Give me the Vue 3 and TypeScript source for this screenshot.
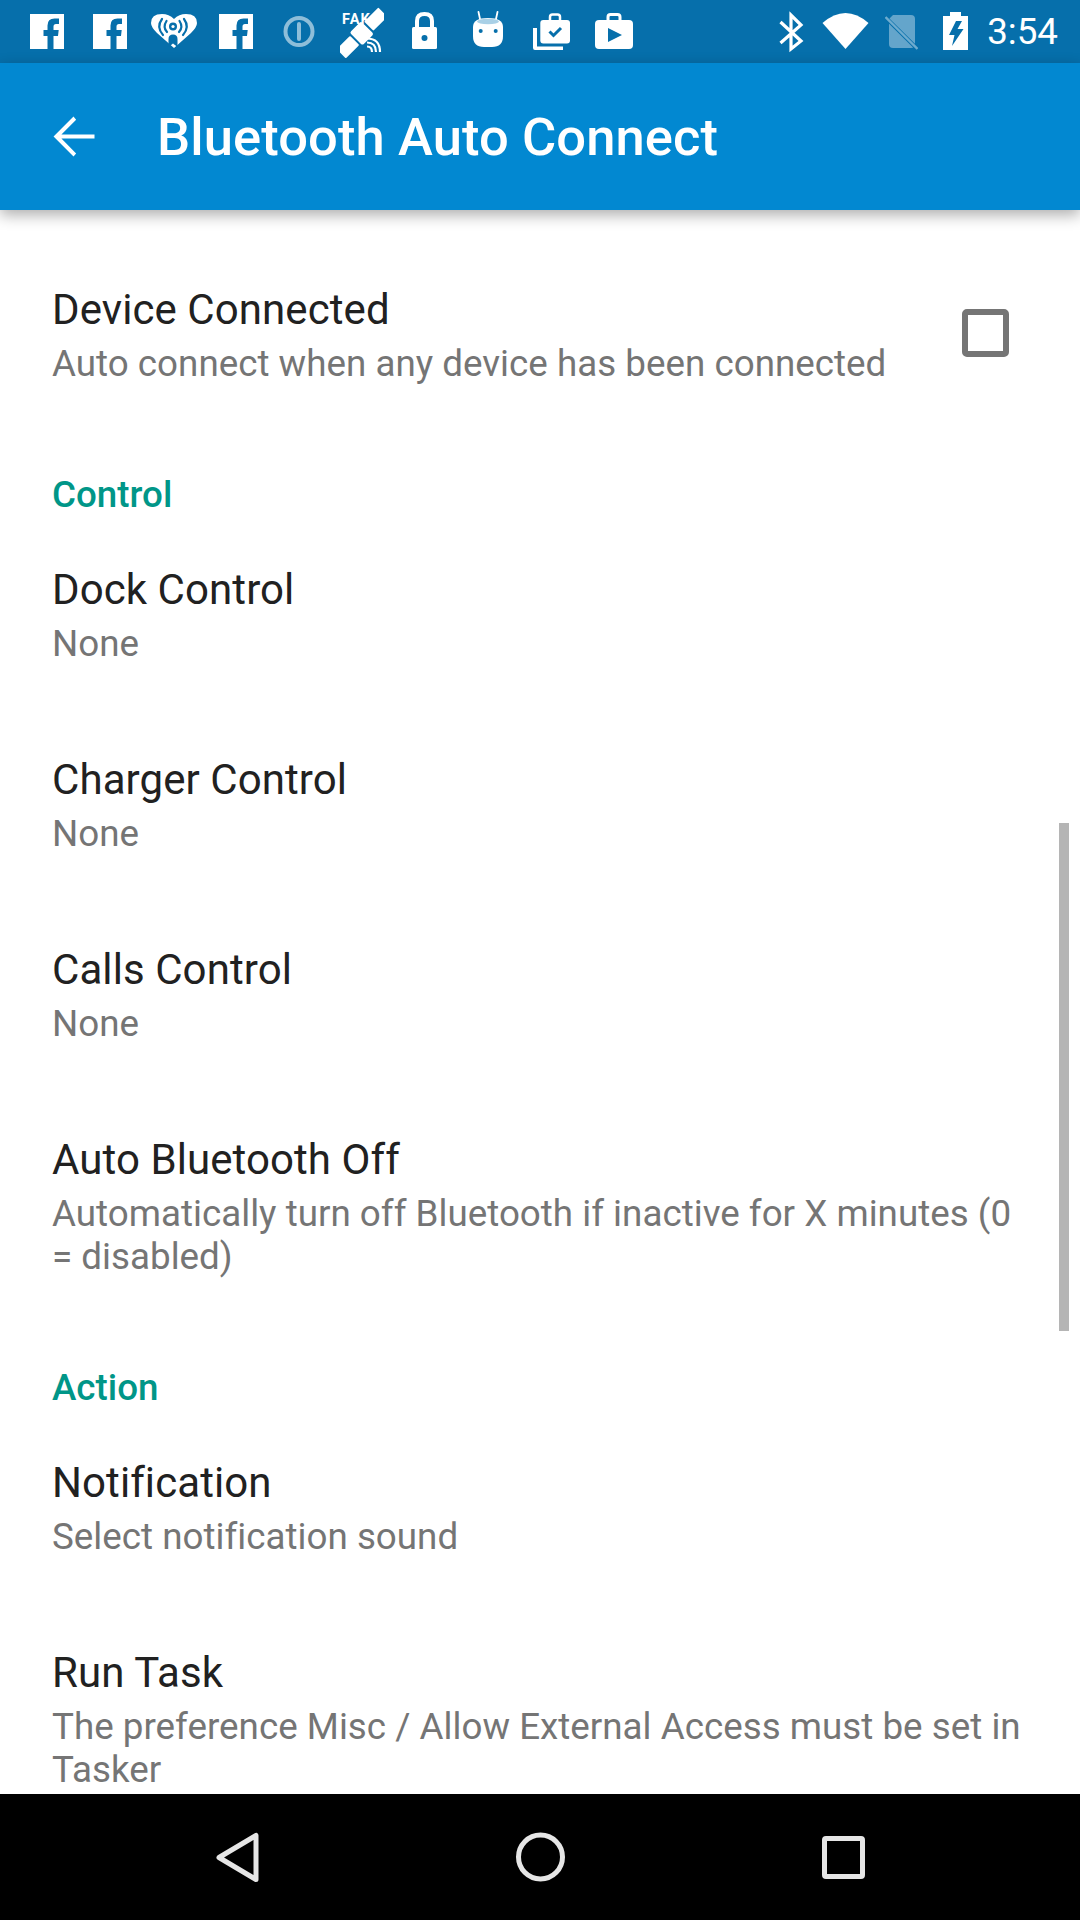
<script setup lang="ts">
interface Item { title: string; summary: string }
interface Section { label: string; items: Item[] }
const sections: Section[] = [
  { label: 'Control', items: [
    { title: 'Dock Control', summary: 'None' },
    { title: 'Charger Control', summary: 'None' },
    { title: 'Calls Control', summary: 'None' },
    { title: 'Auto Bluetooth Off', summary: 'Automatically turn off Bluetooth if inactive for X minutes (0 = disabled)' },
  ]},
  { label: 'Action', items: [
    { title: 'Notification', summary: 'Select notification sound' },
    { title: 'Run Task', summary: 'The preference Misc / Allow External Access must be set in Tasker' },
  ]},
]
const fPath = 'M0 14H34V49H23.5V36H28L28.7 30H23.5V26.5Q23.5 24 26 24H29V18.5H24.5Q17.5 18.5 17.5 25.5V30H13.5V36H17.5V49H0Z'
</script>

<template>
  <div class="screen">
    <header class="status">
      <div class="status-left">
        <svg width="34" height="63" viewBox="0 0 34 63"><path :d="fPath" fill="#fff" /></svg>
        <svg class="ml29" width="34" height="63" viewBox="0 0 34 63"><path :d="fPath" fill="#fff" /></svg>
        <svg class="ml24" width="46" height="63" viewBox="0 0 46 63">
          <path d="M23 48L6 33Q0 27 0 23Q0 14 11 14Q18 14 23 19Q28 14 35 14Q46 14 46 23Q46 27 40 33Z" fill="#fff" />
          <g fill="none" stroke="#066fab" stroke-width="2.2" stroke-linecap="round">
            <path d="M11 19Q5 27 12 35" /><path d="M15.5 21Q11.5 27 16 32" />
            <path d="M33 19Q39 27 32 35" /><path d="M28.5 21Q32.5 27 28 32" />
          </g>
          <circle cx="22" cy="26.5" r="4" fill="#066fab" />
          <circle cx="22" cy="26.5" r="1.6" fill="#fff" />
          <path d="M17.5 47V39Q17.5 34.5 22 34.5Q26.5 34.5 26.5 39V47L22 43.5Z" fill="#066fab" />
        </svg>
        <svg class="ml22" width="34" height="63" viewBox="0 0 34 63"><path :d="fPath" fill="#fff" /></svg>
        <svg class="ml30" width="32" height="63" viewBox="0 0 32 63">
          <circle cx="16" cy="31.5" r="13.5" fill="none" stroke="#fff" stroke-opacity=".55" stroke-width="4" />
          <rect x="14" y="22" width="4" height="19" rx="2" fill="#fff" fill-opacity=".55" />
        </svg>
        <svg class="ml25" width="44" height="63" viewBox="0 0 44 63">
          <text x="2" y="23.5" class="fake">FAK</text>
          <g transform="translate(21.7 33.3) rotate(-45)" fill="#fff">
            <rect x="-8" y="-9" width="16" height="18" rx="2" />
            <rect x="10" y="-6.5" width="20" height="13" rx="1" />
            <rect x="-29" y="-6.5" width="19" height="13" rx="1" />
          </g>
          <g fill="none" stroke="#fff" stroke-width="2.2">
            <path d="M27 46.5Q32 46.5 32 52" /><path d="M27 42.5Q36 42.5 36 52" /><path d="M27 38.5Q40 38.5 40 52" />
          </g>
        </svg>
        <svg class="ml28" width="25" height="63" viewBox="0 0 25 63">
          <path d="M5 28V21Q5 14 12.5 14Q20 14 20 21V28" fill="none" stroke="#fff" stroke-width="4" />
          <rect x="0" y="27" width="25" height="22" rx="1.5" fill="#fff" />
          <circle cx="12.5" cy="38" r="3" fill="#066fab" />
        </svg>
        <svg class="ml36" width="30" height="63" viewBox="0 0 30 63">
          <path d="M7 19L5.5 12M23 19L24.5 12" stroke="#fff" stroke-width="1.8" stroke-linecap="round" />
          <path d="M0 27Q0 18 15 18Q30 18 30 27V36Q30 47 19 47H11Q0 47 0 36Z" fill="#fff" />
          <ellipse cx="15" cy="21.5" rx="11" ry="2.8" fill="#a9d0e6" />
          <circle cx="7.7" cy="31" r="2" fill="#066fab" />
          <circle cx="22.7" cy="31" r="2" fill="#066fab" />
        </svg>
        <svg class="ml30" width="37" height="63" viewBox="0 0 37 63">
          <path d="M0 28H4V46.5H30V50H2Q0 50 0 48Z" fill="#fff" />
          <path d="M17 20V17Q17 14.5 19.5 14.5H24.5Q27 14.5 27 17V20" fill="none" stroke="#fff" stroke-width="2.5" />
          <rect x="7.3" y="20" width="29.7" height="23.5" rx="3" fill="#fff" />
          <path d="M16.5 31.5L20.5 35.5L28 28" fill="none" stroke="#066fab" stroke-width="3" />
        </svg>
        <svg class="ml25" width="38" height="63" viewBox="0 0 38 63">
          <path d="M13 21V17Q13 14.5 15.5 14.5H22.5Q25 14.5 25 17V21" fill="none" stroke="#fff" stroke-width="3" />
          <rect x="0" y="20" width="38" height="29" rx="4" fill="#fff" />
          <path d="M13 28L27 35L13 42Z" fill="#066fab" />
        </svg>
      </div>
      <div class="status-right">
        <svg width="25" height="63" viewBox="0 0 25 63">
          <path d="M1.5 22L22 41L12 49V15L22 25L1.5 43" fill="none" stroke="#fff" stroke-width="3.2" />
        </svg>
        <svg class="ml18" width="47" height="63" viewBox="0 0 47 63">
          <path d="M0.5 23Q23.5 3 46.5 23L23.5 49Z" fill="#fff" />
        </svg>
        <svg class="ml16" width="33" height="63" viewBox="0 0 33 63">
          <path d="M8 15H26Q30 15 30 19V44Q30 48 26 48H8Q4 48 4 44V19Z" fill="#fff" fill-opacity=".38" />
          <path d="M1 18L32 48.5" stroke="#066fab" stroke-width="4" />
          <path d="M0.5 17L32.5 49" stroke="#fff" stroke-opacity=".42" stroke-width="2.4" />
        </svg>
        <svg class="ml25" width="25" height="63" viewBox="0 0 25 63">
          <path d="M7 12H18V16H25V50H0V16H7Z" fill="#fff" />
          <path d="M13 21L6 35H11.5L9 46L20.5 29H14.5L19 21Z" fill="#066fab" />
        </svg>
        <span class="clock">3:54</span>
      </div>
    </header>

    <div class="appbar">
      <svg class="back" width="63" height="63" viewBox="0 0 24 24">
        <path d="M20 11.2H7.4l5.6-5.6L12 4.4 4.4 12l7.6 7.6 1-1.1-5.6-5.7H20z" fill="#fff" />
      </svg>
      <h1 class="title">Bluetooth Auto Connect</h1>
    </div>

    <main class="list">
      <div class="item row">
        <div class="text">
          <div class="item-title">Device Connected</div>
          <div class="item-summary">Auto connect when any device has been connected</div>
        </div>
        <span class="checkbox"></span>
      </div>
      <section v-for="section in sections" :key="section.label">
        <div class="category">{{ section.label }}</div>
        <div v-for="item in section.items" :key="item.title" class="item">
          <div class="item-title">{{ item.title }}</div>
          <div class="item-summary">{{ item.summary }}</div>
        </div>
      </section>
      <div class="scrollbar"></div>
    </main>

    <nav class="navbar">
      <svg width="126" height="126" viewBox="0 0 126 126">
        <path d="M82 41.5V85.5L45 63.5Z" fill="none" stroke="#e6e6e6" stroke-width="5" stroke-linejoin="round" />
      </svg>
      <svg width="126" height="126" viewBox="0 0 126 126">
        <circle cx="63.5" cy="63" r="22" fill="none" stroke="#e6e6e6" stroke-width="5" />
      </svg>
      <svg width="126" height="126" viewBox="0 0 126 126">
        <rect x="44.5" y="44.5" width="38" height="38" rx="1.5" fill="none" stroke="#e6e6e6" stroke-width="5" />
      </svg>
    </nav>
  </div>
</template>

<style>
html, body { margin: 0; background: #fff; }
</style>

<style scoped>
.screen {
  width: 1080px;
  height: 1920px;
  display: flex;
  flex-direction: column;
  overflow: hidden;
  font-family: Roboto, "Liberation Sans", sans-serif;
  background: #fff;
}
.status {
  height: 63px;
  flex: none;
  display: flex;
  justify-content: space-between;
  background: #066fab;
}
.status-left { display: flex; padding-left: 30px; }
.status-right { display: flex; padding-right: 22px; align-items: center; }
.status svg { display: block; flex: none; }
.ml16 { margin-left: 16px; }
.ml18 { margin-left: 18px; }
.ml22 { margin-left: 22px; }
.ml24 { margin-left: 24px; }
.ml25 { margin-left: 25px; }
.ml28 { margin-left: 28px; }
.ml29 { margin-left: 29px; }
.ml30 { margin-left: 30px; }
.ml36 { margin-left: 36px; }
.fake { font: 700 14.5px Roboto, sans-serif; letter-spacing: 1px; fill: #fff; }
.clock { margin-left: 19px; font-size: 36.75px; color: #fff; line-height: 63px; }
.appbar {
  height: 147px;
  flex: none;
  display: flex;
  align-items: center;
  background: #0288d1;
  position: relative;
  z-index: 1;
  box-shadow: 0 5px 14px rgba(0, 0, 0, 0.32);
}
.back { margin-left: 42px; flex: none; }
.title {
  margin: 0 0 0 52px;
  font-size: 52.5px;
  font-weight: 500;
  letter-spacing: 0.1px;
  color: #fff;
}
.list {
  flex: 1;
  min-height: 0;
  overflow: hidden;
  position: relative;
  padding-top: 26px;
  background: #fff;
}
.item { padding: 49px 53px 41.5px 52px; }
.row { display: flex; align-items: center; }
.text { flex: 1; min-width: 0; }
.item-title { font-size: 42px; line-height: 49px; letter-spacing: 0.08px; color: #212121; }
.item-summary { margin-top: 7.5px; font-size: 36.75px; line-height: 43px; letter-spacing: 0.015px; color: #757575; }
.checkbox {
  flex: none;
  box-sizing: border-box;
  width: 47px;
  height: 48px;
  margin: 0 18px 4px 0;
  border: 6px solid #757575;
  border-radius: 5px;
}
.category {
  padding: 48px 52px 0;
  font-size: 36.75px;
  line-height: 42px;
  font-weight: 500;
  color: #009688;
}
.scrollbar {
  position: absolute;
  top: 613px;
  right: 11px;
  width: 10px;
  height: 508px;
  background: #b5b5b5;
}
.navbar {
  height: 126px;
  flex: none;
  display: flex;
  justify-content: center;
  gap: 177px;
  background: #000;
}
</style>
